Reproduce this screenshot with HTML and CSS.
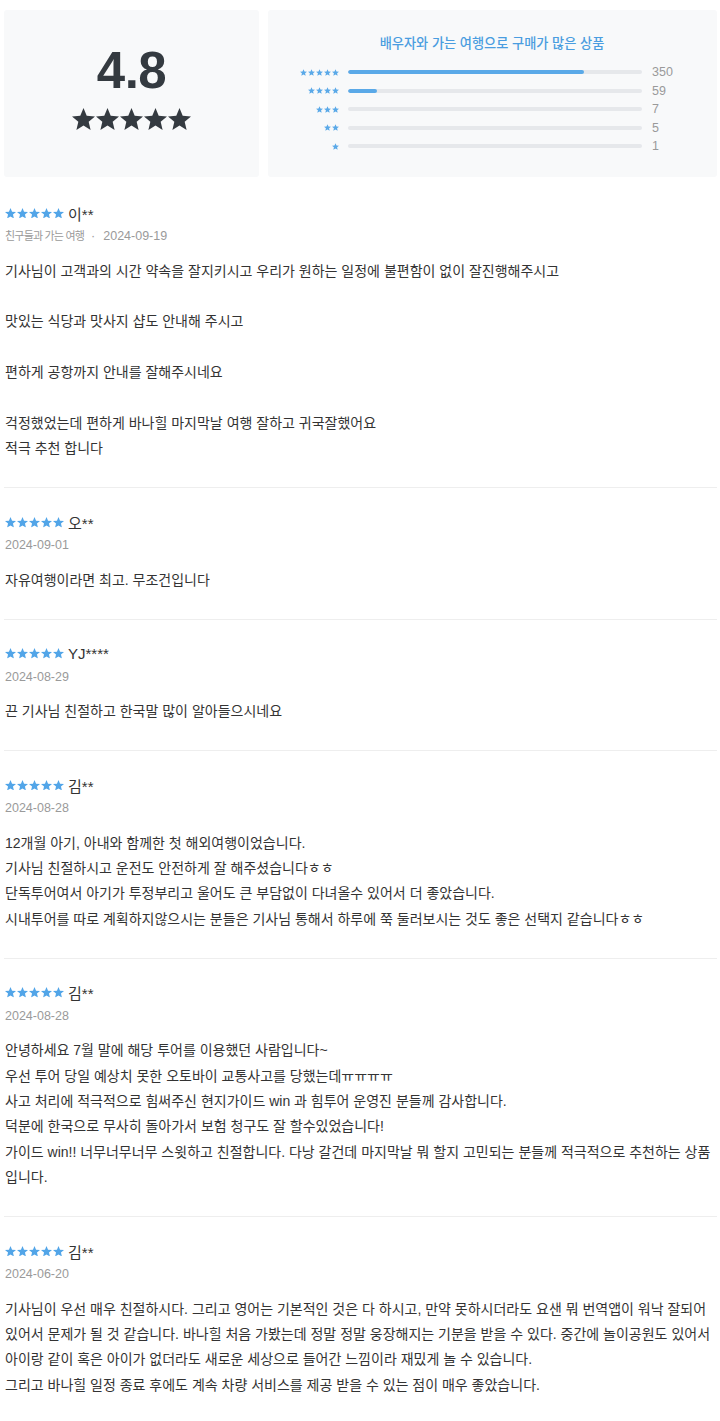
FILE: index.html
```html
<!DOCTYPE html>
<html lang="ko">
<head>
<meta charset="utf-8">
<title>리뷰</title>
<link rel="stylesheet" href="styles.css">
</head>
<body>
<svg class="defs" width="0" height="0" aria-hidden="true">
  <defs>
    <symbol id="star" viewBox="0 0 19.02 18.09">
      <polygon fill="currentColor" points="9.51,0 12.16,6.36 19.02,6.91 13.79,11.39 15.39,18.09 9.51,14.5 3.63,18.09 5.23,11.39 0,6.91 6.86,6.36"/>
    </symbol>
  </defs>
</svg>
<main class="page">
  <section class="summary">
    <div class="score-card">
      <div class="score">4.8</div>
      <div class="stars stars-lg">
        <svg><use href="#star"/></svg><svg><use href="#star"/></svg><svg><use href="#star"/></svg><svg><use href="#star"/></svg><svg><use href="#star"/></svg>
      </div>
    </div>
    <div class="dist-card">
      <h2 class="dist-title">배우자와 가는 여행으로 구매가 많은 상품</h2>
      <ul class="dist">
        <li class="dist-row">
          <span class="stars stars-xs"><svg><use href="#star"/></svg><svg><use href="#star"/></svg><svg><use href="#star"/></svg><svg><use href="#star"/></svg><svg><use href="#star"/></svg></span>
          <span class="track"><span class="fill" style="width:80.2%"></span></span>
          <span class="count">350</span>
        </li>
        <li class="dist-row">
          <span class="stars stars-xs"><svg><use href="#star"/></svg><svg><use href="#star"/></svg><svg><use href="#star"/></svg><svg><use href="#star"/></svg></span>
          <span class="track"><span class="fill" style="width:9.9%"></span></span>
          <span class="count">59</span>
        </li>
        <li class="dist-row">
          <span class="stars stars-xs"><svg><use href="#star"/></svg><svg><use href="#star"/></svg><svg><use href="#star"/></svg></span>
          <span class="track"><span class="fill" style="width:0%"></span></span>
          <span class="count">7</span>
        </li>
        <li class="dist-row">
          <span class="stars stars-xs"><svg><use href="#star"/></svg><svg><use href="#star"/></svg></span>
          <span class="track"><span class="fill" style="width:0%"></span></span>
          <span class="count">5</span>
        </li>
        <li class="dist-row">
          <span class="stars stars-xs"><svg><use href="#star"/></svg></span>
          <span class="track"><span class="fill" style="width:0%"></span></span>
          <span class="count">1</span>
        </li>
      </ul>
    </div>
  </section>

  <section class="reviews">
    <article class="review">
      <div class="review-head">
        <span class="stars stars-sm"><svg><use href="#star"/></svg><svg><use href="#star"/></svg><svg><use href="#star"/></svg><svg><use href="#star"/></svg><svg><use href="#star"/></svg></span>
        <span class="name">이**</span>
      </div>
      <div class="meta"><span class="trip">친구들과 가는 여행</span><span class="sep">·</span>2024-09-19</div>
      <p class="body">기사님이 고객과의 시간 약속을 잘지키시고 우리가 원하는 일정에 불편함이 없이 잘진행해주시고<br><br>맛있는 식당과 맛사지 샵도 안내해 주시고<br><br>편하게 공항까지 안내를 잘해주시네요<br><br>걱정했었는데 편하게 바나힐 마지막날 여행 잘하고 귀국잘했어요<br>적극 추천 합니다</p>
    </article>

    <article class="review">
      <div class="review-head">
        <span class="stars stars-sm"><svg><use href="#star"/></svg><svg><use href="#star"/></svg><svg><use href="#star"/></svg><svg><use href="#star"/></svg><svg><use href="#star"/></svg></span>
        <span class="name">오**</span>
      </div>
      <div class="meta">2024-09-01</div>
      <p class="body">자유여행이라면 최고. 무조건입니다</p>
    </article>

    <article class="review">
      <div class="review-head">
        <span class="stars stars-sm"><svg><use href="#star"/></svg><svg><use href="#star"/></svg><svg><use href="#star"/></svg><svg><use href="#star"/></svg><svg><use href="#star"/></svg></span>
        <span class="name">YJ****</span>
      </div>
      <div class="meta">2024-08-29</div>
      <p class="body">끈 기사님 친절하고 한국말 많이 알아들으시네요</p>
    </article>

    <article class="review">
      <div class="review-head">
        <span class="stars stars-sm"><svg><use href="#star"/></svg><svg><use href="#star"/></svg><svg><use href="#star"/></svg><svg><use href="#star"/></svg><svg><use href="#star"/></svg></span>
        <span class="name">김**</span>
      </div>
      <div class="meta">2024-08-28</div>
      <p class="body">12개월 아기, 아내와 함께한 첫 해외여행이었습니다.<br>기사님 친절하시고 운전도 안전하게 잘 해주셨습니다ㅎㅎ<br>단독투어여서 아기가 투정부리고 울어도 큰 부담없이 다녀올수 있어서 더 좋았습니다.<br>시내투어를 따로 계획하지않으시는 분들은 기사님 통해서 하루에 쭉 둘러보시는 것도 좋은 선택지 같습니다ㅎㅎ</p>
    </article>

    <article class="review">
      <div class="review-head">
        <span class="stars stars-sm"><svg><use href="#star"/></svg><svg><use href="#star"/></svg><svg><use href="#star"/></svg><svg><use href="#star"/></svg><svg><use href="#star"/></svg></span>
        <span class="name">김**</span>
      </div>
      <div class="meta">2024-08-28</div>
      <p class="body">안녕하세요 7월 말에 해당 투어를 이용했던 사람입니다~<br>우선 투어 당일 예상치 못한 오토바이 교통사고를 당했는데ㅠㅠㅠㅠ<br>사고 처리에 적극적으로 힘써주신 현지가이드 win 과 힘투어 운영진 분들께 감사합니다.<br>덕분에 한국으로 무사히 돌아가서 보험 청구도 잘 할수있었습니다!<br>가이드 win!! 너무너무너무 스윗하고 친절합니다. 다낭 갈건데 마지막날 뭐 할지 고민되는 분들께 적극적으로 추천하는 상품입니다.</p>
    </article>

    <article class="review">
      <div class="review-head">
        <span class="stars stars-sm"><svg><use href="#star"/></svg><svg><use href="#star"/></svg><svg><use href="#star"/></svg><svg><use href="#star"/></svg><svg><use href="#star"/></svg></span>
        <span class="name">김**</span>
      </div>
      <div class="meta">2024-06-20</div>
      <p class="body">기사님이 우선 매우 친절하시다. 그리고 영어는 기본적인 것은 다 하시고, 만약 못하시더라도 요샌 뭐 번역앱이 워낙 잘되어 있어서 문제가 될 것 같습니다. 바나힐 처음 가봤는데 정말 정말 웅장해지는 기분을 받을 수 있다. 중간에 놀이공원도 있어서 아이랑 같이 혹은 아이가 없더라도 새로운 세상으로 들어간 느낌이라 재밌게 놀 수 있습니다.<br>그리고 바나힐 일정 종료 후에도 계속 차량 서비스를 제공 받을 수 있는 점이 매우 좋았습니다.</p>
    </article>
  </section>
</main>
</body>
</html>
```

FILE: styles.css
```css
* { box-sizing: border-box; }

body {
  margin: 0;
  background: #ffffff;
  font-family: "Liberation Sans", "Noto Sans CJK KR", sans-serif;
  color: #333333;
}

.defs { position: absolute; width: 0; height: 0; overflow: hidden; }

.page { padding: 10px 2px 0 4px; }

.summary {
  display: grid;
  grid-template-columns: 255px 1fr;
  gap: 9px;
  margin-right: 1px;
  margin-bottom: 2px;
}

.score-card,
.dist-card {
  background: #f8f9fa;
  border-radius: 3px;
  height: 167px;
}

.score-card {
  display: flex;
  flex-direction: column;
  align-items: center;
  padding-top: 35px;
}

.score {
  font-size: 51px;
  line-height: 51px;
  font-weight: 700;
  color: #343a40;
  letter-spacing: -0.5px;
}

.stars { display: flex; }

.stars-lg {
  margin-top: 12px;
  gap: 1.2px;
  color: #343a40;
}
.stars-lg svg { width: 23px; height: 22px; display: block; }

.dist-card { padding: 25px 35px 0 30px; }

.dist-title {
  margin: 0;
  font-size: 13.2px;
  line-height: 18px;
  font-weight: 500;
  text-align: center;
  color: #4a9de0;
  padding-left: 4px;
}

.dist {
  list-style: none;
  margin: 10px 0 0;
  padding: 0;
}

.dist-row {
  display: grid;
  grid-template-columns: 41px 1fr 31px;
  column-gap: 9px;
  align-items: center;
  height: 18.5px;
}

.stars-xs {
  justify-content: flex-end;
  gap: 1px;
  color: #5aa9e8;
}
.stars-xs svg { width: 7px; height: 7px; display: block; }

.track {
  display: block;
  height: 4px;
  background: #e6e8eb;
  border-radius: 2px;
  overflow: hidden;
}

.fill {
  display: block;
  height: 100%;
  background: #5aa9e8;
  border-radius: 2px;
}

.count {
  font-size: 12.5px;
  line-height: 18px;
  color: #9a9a9a;
  padding-left: 1px;
}

.review {
  padding: 24px 0 25.5px;
  border-bottom: 1px solid #eeeeee;
  margin-right: 1px;
}

.review-head {
  display: flex;
  align-items: center;
  gap: 4px;
  height: 20px;
  padding-left: 1px;
}

.stars-sm {
  gap: 1px;
  color: #52a5e8;
}
.stars-sm svg { width: 11px; height: 10.5px; display: block; }

.name {
  font-size: 15px;
  color: #333333;
}

.meta {
  margin-top: 4px;
  font-size: 12.5px;
  line-height: 18px;
  color: #9a9a9a;
  padding-left: 1px;
}

.trip {
  font-size: 11px;
  letter-spacing: -0.8px;
}

.sep {
  display: inline-block;
  margin: 0 8px 0 7px;
}

.body {
  margin: 13.5px -1px 0 0;
  font-size: 14px;
  line-height: 25.4px;
  color: #333333;
  padding-left: 1px;
}
```
